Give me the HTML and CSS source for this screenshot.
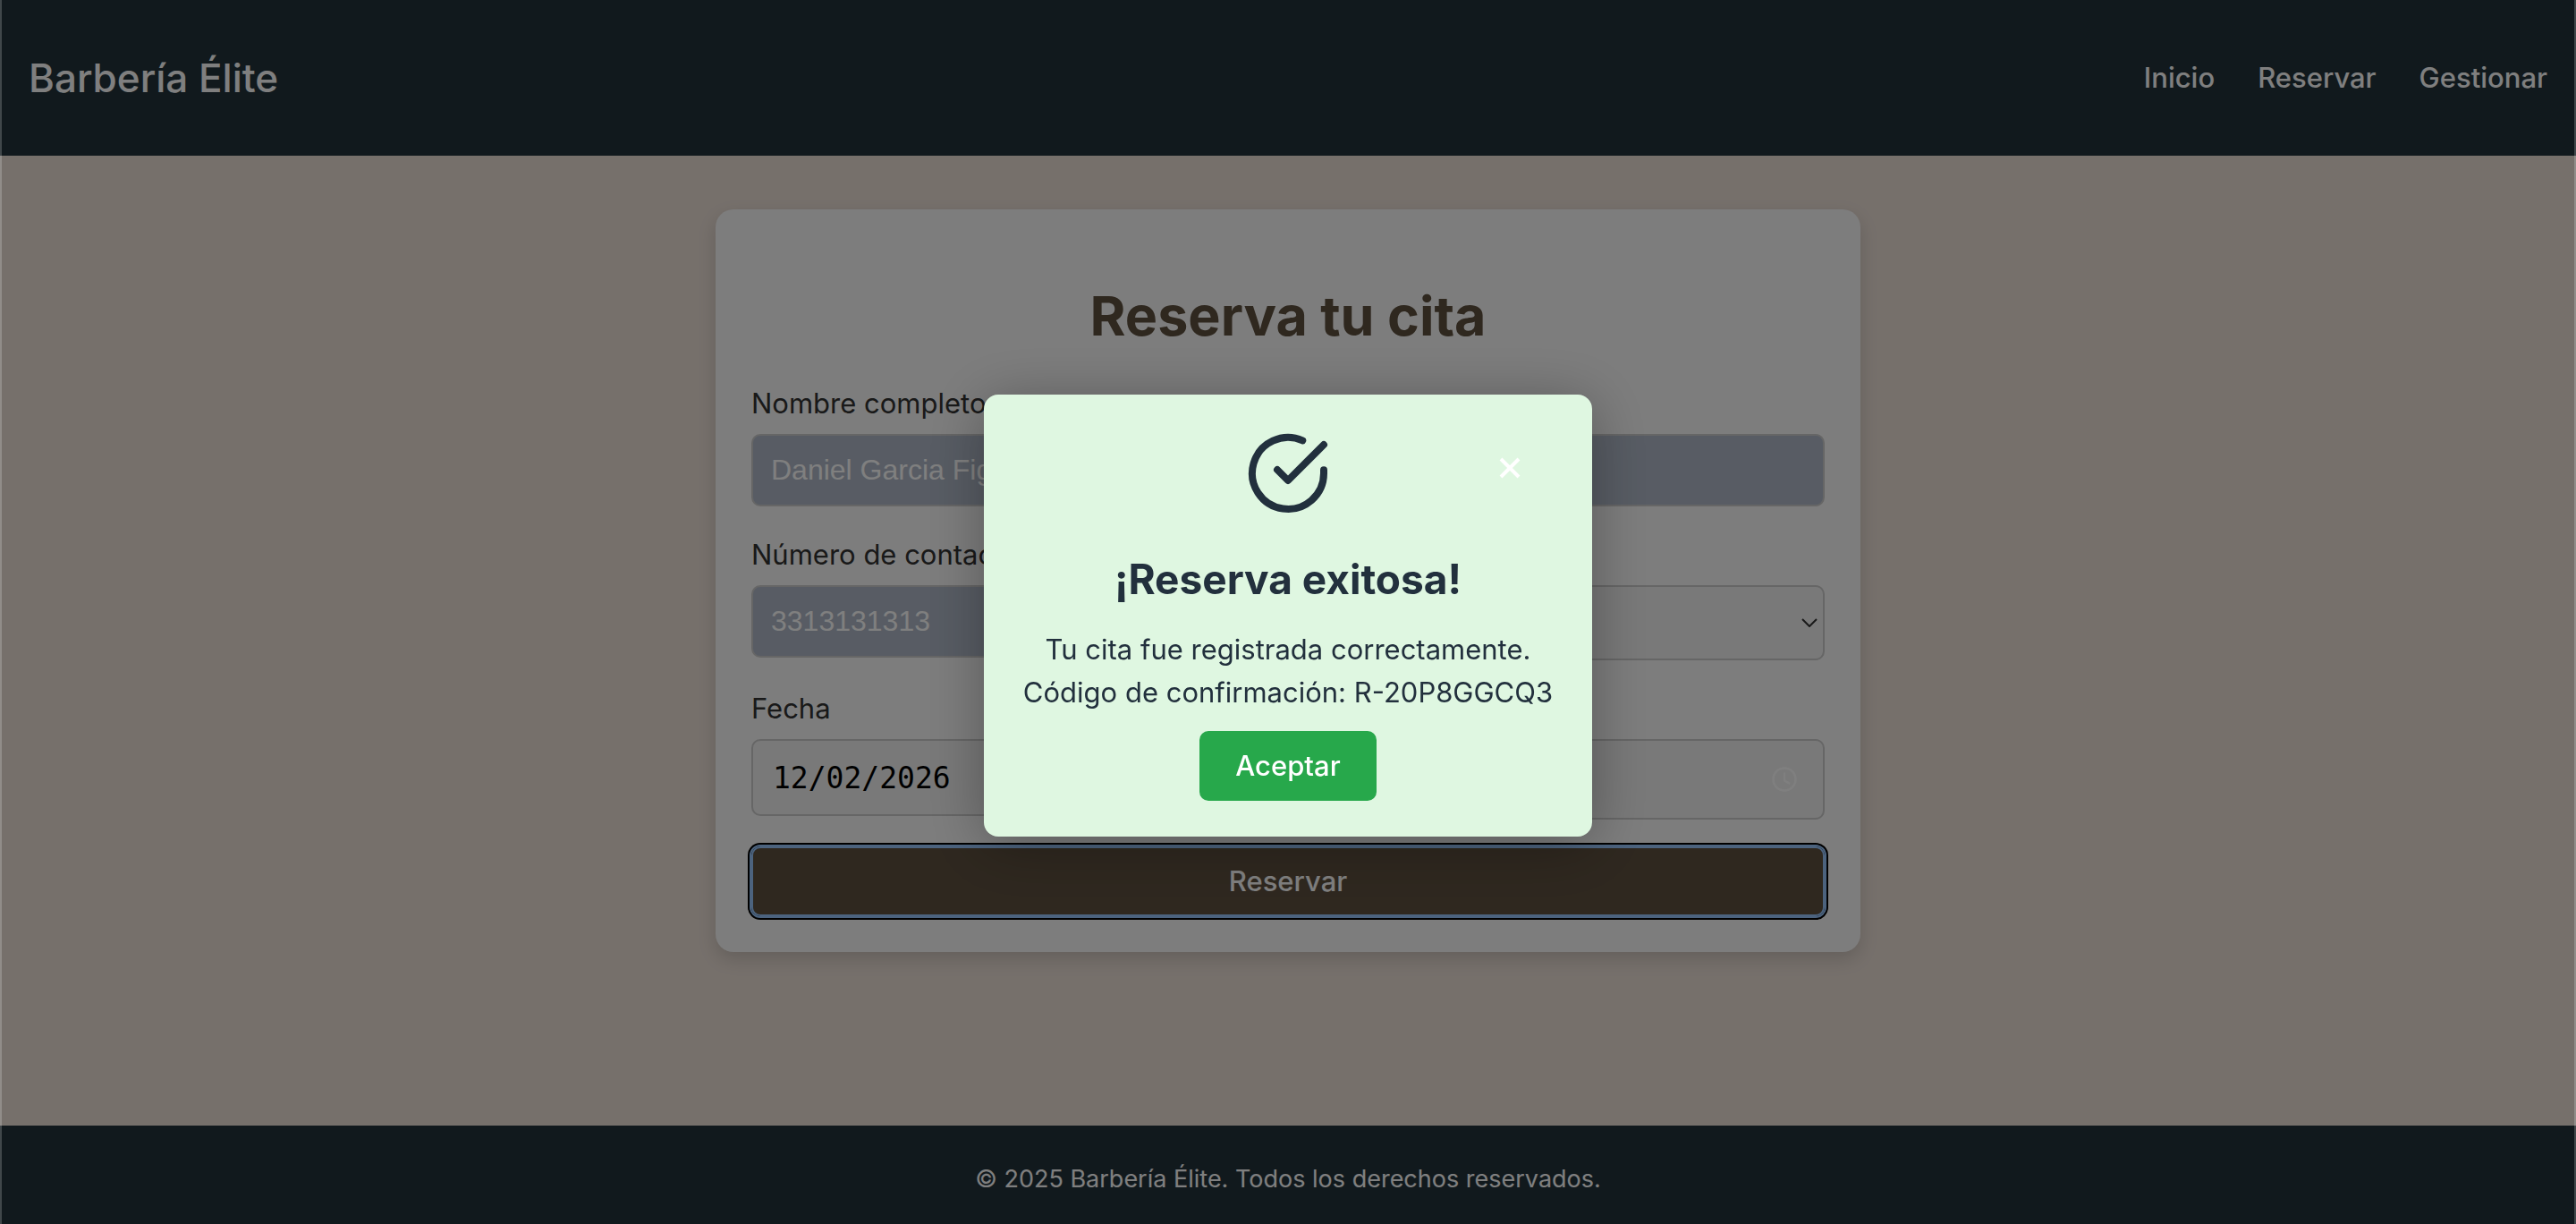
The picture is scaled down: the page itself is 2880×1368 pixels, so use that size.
FILE: index.html
```html
<!DOCTYPE html>
<html lang="es">
<head>
<meta charset="utf-8">
<meta name="viewport" content="width=device-width, initial-scale=1">
<title>Barbería Élite</title>
<link rel="stylesheet" href="styles.css">
</head>
<body>
<header class="site-header">
  <a class="brand" href="#">Barbería Élite</a>
  <nav class="nav">
    <a href="#">Inicio</a>
    <a href="#">Reservar</a>
    <a href="#">Gestionar</a>
  </nav>
</header>

<main class="main">
  <form class="card">
    <h1 class="card-title">Reserva tu cita</h1>
    <div class="field">
      <label for="nombre">Nombre completo</label>
      <input class="control filled" id="nombre" type="text" value="Daniel Garcia Figueroa">
    </div>
    <div class="row">
      <div class="field">
        <label for="telefono">Número de contacto</label>
        <input class="control filled" id="telefono" type="tel" value="3313131313">
      </div>
      <div class="field">
        <label for="servicio">Servicio</label>
        <div class="control-wrap">
          <select class="control select" id="servicio"><option>Corte</option></select>
          <svg class="chevron" viewBox="0 0 18 10" aria-hidden="true"><path d="M1 1l8 8 8-8"/></svg>
        </div>
      </div>
    </div>
    <div class="row">
      <div class="field">
        <label for="fecha">Fecha</label>
        <input class="control date" id="fecha" type="text" value="12/02/2026">
      </div>
      <div class="field">
        <label for="hora">Hora</label>
        <div class="control-wrap">
          <input class="control time" id="hora" type="text" value="10:00">
          <svg class="clock" viewBox="0 0 24 24" aria-hidden="true"><circle cx="12" cy="12" r="10"/><path d="M12 6v7l5 3"/></svg>
        </div>
      </div>
    </div>
    <button class="submit" type="button">Reservar</button>
  </form>
</main>

<footer class="site-footer">© 2025 Barbería Élite. Todos los derechos reservados.</footer>

<div class="overlay">
  <div class="modal" role="dialog" aria-labelledby="modal-title">
    <svg class="check" viewBox="0 0 24 24" aria-hidden="true"><path d="M22 11.08V12a10 10 0 1 1-5.93-9.14"/><path d="M22 4 12 14.01l-3-3"/></svg>
    <button class="close" type="button" aria-label="Cerrar"><svg viewBox="0 0 24 24" aria-hidden="true"><path d="M2 2l20 20M22 2L2 22"/></svg></button>
    <h2 class="modal-title" id="modal-title">¡Reserva exitosa!</h2>
    <p class="modal-text">Tu cita fue registrada correctamente.<br>Código de confirmación: R-20P8GGCQ3</p>
    <button class="accept" type="button">Aceptar</button>
  </div>
</div>
</body>
</html>
```

FILE: styles.css
```css
* {
  box-sizing: border-box;
}

body {
  margin: 0;
  min-height: 100vh;
  display: flex;
  flex-direction: column;
  background: #ece0d7;
  color: #333;
  font-family: Inter, "Liberation Sans", sans-serif;
  font-size: 31px;
  line-height: 48px;
}

.site-header {
  display: flex;
  align-items: center;
  justify-content: space-between;
  height: 174px;
  padding: 0 32px;
  background: #22333b;
}

.site-header a {
  color: #fff;
  text-decoration: none;
  font-weight: 500;
}

.site-header .brand {
  font-size: 44px;
  line-height: 56px;
}

.nav {
  display: flex;
  gap: 48px;
}

.main {
  flex: 1;
  padding: 60px 32px;
}

.card {
  max-width: 1280px;
  margin: 0 auto;
  padding: 80px 40px 40px;
  background: #fafafa;
  border-radius: 20px;
  box-shadow: 0 8px 20px rgba(0, 0, 0, 0.15);
}

.card-title {
  margin: 0 0 35px;
  color: #5e503f;
  font-size: 61px;
  line-height: 78px;
  font-weight: 700;
  text-align: center;
}

.field {
  flex: 1;
  display: flex;
  flex-direction: column;
  gap: 10px;
  margin-bottom: 30px;
}

.row {
  display: flex;
  align-items: flex-start;
  gap: 32px;
}

.control {
  width: 100%;
  height: 81px;
  padding: 0 20px;
  border: 2px solid #ccc;
  border-radius: 10px;
  background: #f2f2f2;
  color: #000;
  font: 32px/40px "Liberation Sans", sans-serif;
}

.filled {
  background: #b0b9c8;
  color: #fff;
}

.control-wrap {
  position: relative;
  display: flex;
}

.select {
  height: 84px;
  appearance: none;
}

.date {
  height: 86px;
  padding: 0 22px;
  font-family: "DejaVu Sans Mono", monospace;
  font-size: 33px;
}

.time {
  height: 90px;
}

.chevron {
  position: absolute;
  right: 8px;
  top: 37px;
  width: 18px;
  height: 10px;
  fill: none;
  stroke: #333;
  stroke-width: 2;
}

.clock {
  position: absolute;
  right: 30px;
  top: 30px;
  width: 30px;
  height: 30px;
  fill: none;
  stroke: #fff;
  stroke-width: 2;
}

.submit {
  display: block;
  width: 100%;
  height: 78px;
  border: 2px solid #98c6fc;
  border-radius: 10px;
  outline: 2px solid #98c6fc;
  box-shadow: 0 0 0 4px #000;
  background: #5e503f;
  color: #fff;
  font: 500 31px/40px Inter, sans-serif;
}

.site-footer {
  padding: 36px 32px 26px;
  background: #22333b;
  color: #fff;
  font-size: 27px;
  text-align: center;
}

.overlay {
  position: fixed;
  inset: 0;
  display: flex;
  align-items: center;
  justify-content: center;
  padding: 8px 0 0;
  background: rgba(0, 0, 0, 0.5);
  box-shadow: inset 2px 0 rgba(255, 255, 255, 0.2), inset -2px 0 rgba(255, 255, 255, 0.2);
}

.modal {
  position: relative;
  display: flex;
  flex-direction: column;
  align-items: center;
  width: 680px;
  padding: 40px;
  border-radius: 16px;
  background: #dff7e1;
  color: #22303d;
  text-align: center;
  box-shadow: 0 8px 64px rgba(0, 0, 0, 0.3);
}

.check {
  width: 96px;
  height: 96px;
  fill: none;
  stroke: currentColor;
  stroke-width: 2;
  stroke-linecap: round;
  stroke-linejoin: round;
}

.close {
  position: absolute;
  top: 62px;
  right: 72px;
  width: 40px;
  height: 40px;
  padding: 8px;
  border: 0;
  background: none;
}

.close svg {
  display: block;
  width: 24px;
  height: 24px;
  stroke: #fff;
  stroke-width: 4;
}

.modal-title {
  margin: 40px 0 25px;
  font-size: 46px;
  line-height: 60px;
  font-weight: 700;
}

.modal-text {
  margin: 0 0 19px;
  white-space: nowrap;
}

.accept {
  height: 78px;
  padding: 0 40px;
  border: 0;
  border-radius: 10px;
  background: #27a84b;
  color: #fff;
  font: 500 31px/40px Inter, sans-serif;
}
```
